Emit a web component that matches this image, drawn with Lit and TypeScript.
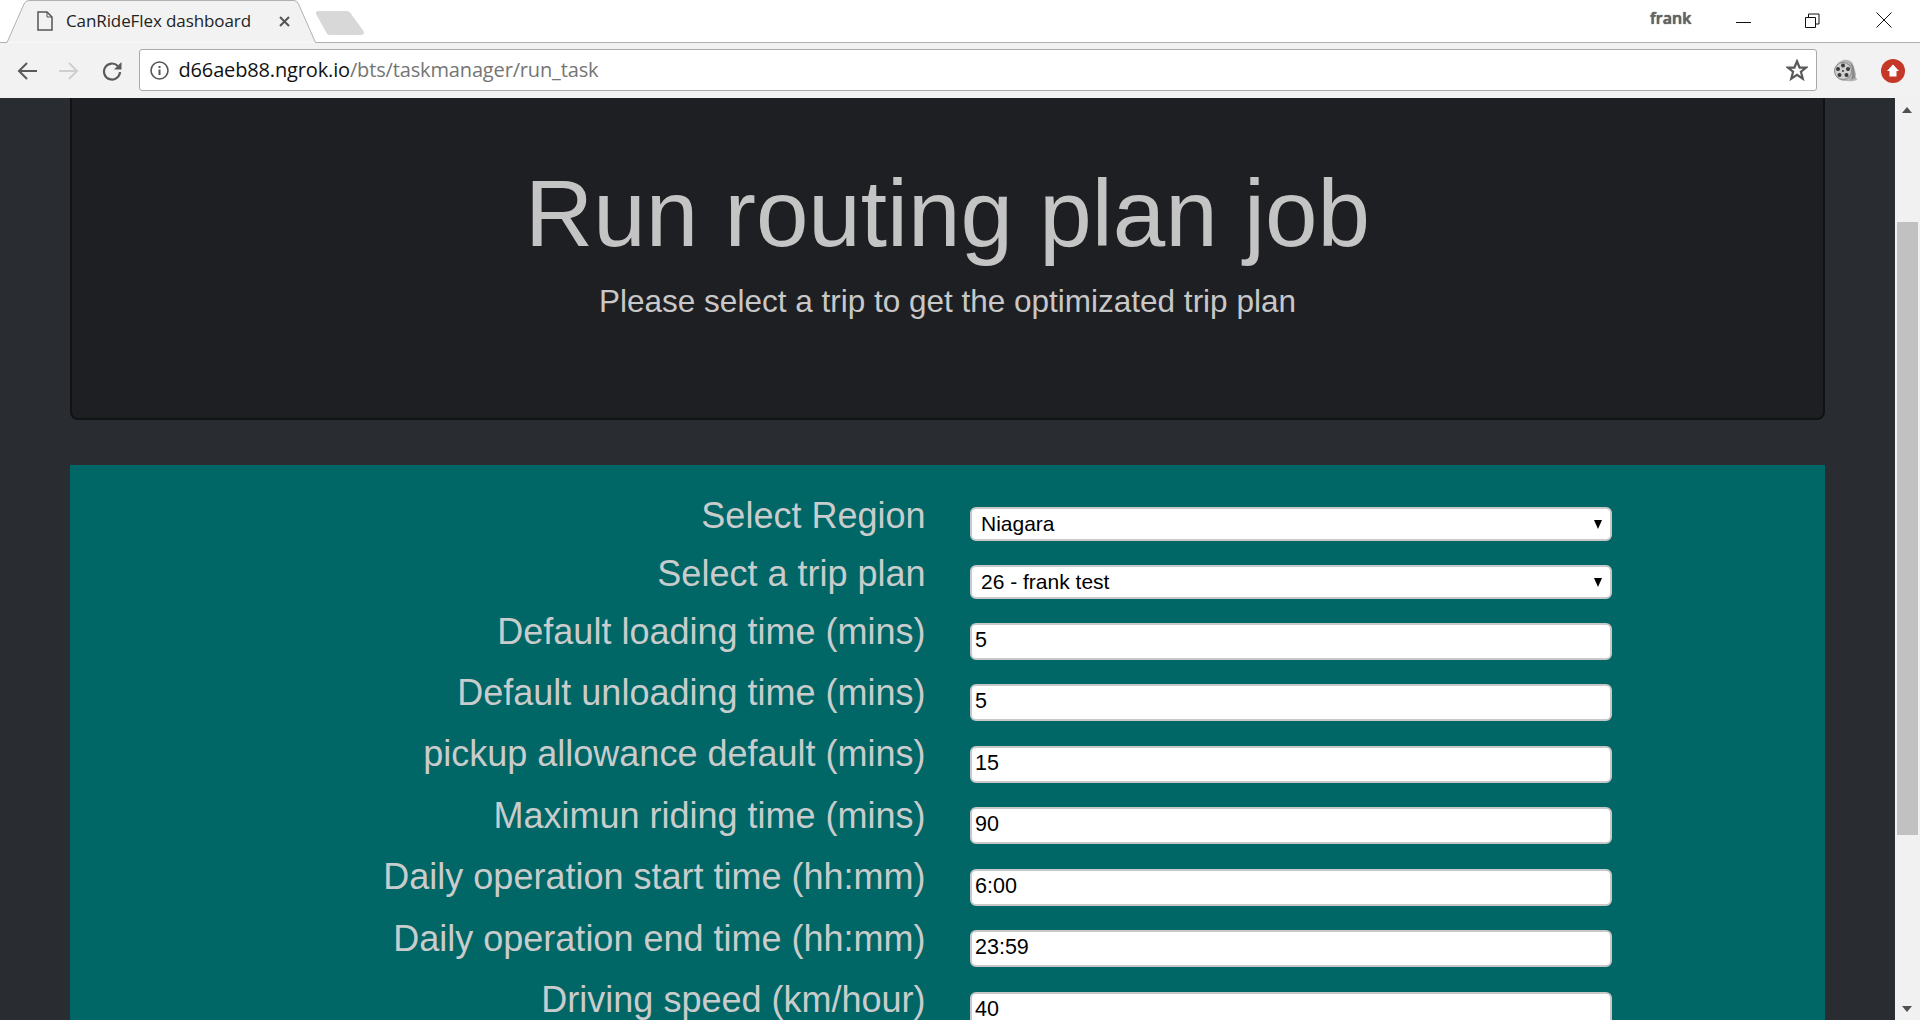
import { LitElement, html, css } from "lit";
import { customElement } from "lit/decorators.js";

const rows: [string, string, boolean, number][] = [
  ["Select Region", "Niagara", true, 58],
  ["Select a trip plan", "26 - frank test", true, 58],
  ["Default loading time (mins)", "5", false, 61],
  ["Default unloading time (mins)", "5", false, 61.5],
  ["pickup allowance default (mins)", "15", false, 61.5],
  ["Maximun riding time (mins)", "90", false, 61.5],
  ["Daily operation start time (hh:mm)", "6:00", false, 61.5],
  ["Daily operation end time (hh:mm)", "23:59", false, 61.5],
  ["Driving speed (km/hour)", "40", false, 61.5],
];

@customElement("app-root")
export class AppRoot extends LitElement {
  static styles = css`
    :host { display: flex; flex-direction: column; width: 1920px; height: 1020px; overflow: hidden; font-family: "Liberation Sans", Arial, sans-serif; background: #fff; }
    .tabstrip { height: 43px; flex: none; box-sizing: border-box; padding: 0 28px 1px 37px; background: #fff; display: flex; align-items: center; position: relative; }
    .tabsvg { position: absolute; left: 0; top: 0; }
    .tabicon { position: relative; flex: none; }
    .tabtitle { position: relative; flex: none; width: 184px; margin-left: 13px; font: 17px/20px "Open Sans", sans-serif; color: #222; letter-spacing: -0.1px; white-space: nowrap; }
    .tabclose { position: relative; flex: none; margin-left: 29px; }
    .spacer { flex: 1; }
    .user { margin: -6px 0 0 0; width: 40px; font: 16px/20px "Open Sans", sans-serif; font-weight: 600; color: #666; text-shadow: 0 0 1px #222, 0 0 3px #fff; }
    .min { flex: none; margin: 0 0 -1px 46px; }
    .restore { flex: none; margin: -2px 0 0 54px; }
    .close { flex: none; margin: -2px 0 0 56px; }
    .toolbar { height: 55px; flex: none; box-sizing: border-box; padding-left: 17px; background: #f2f2f2; display: flex; align-items: center; }
    .forward { margin-left: 22px; }
    .reload { margin-left: 23px; }
    .omni { margin: -1px 0 0 16.5px; width: 1678.5px; height: 42px; flex: none; box-sizing: border-box; padding: 0 8px 0 10px; display: flex; align-items: center; background: #fff; border: 1px solid #a9a9a9; border-radius: 3px; }
    .url { margin-left: 10px; font: 20px/24px "Open Sans", sans-serif; color: #757575; letter-spacing: -0.15px; white-space: nowrap; }
    .url b { font-weight: 400; color: #111; }
    .star { margin-left: auto; }
    .film { margin-left: 17px; flex: none; }
    .red { margin-left: 23px; flex: none; }
    .main { flex: 1; min-height: 0; display: flex; background: #292c30; overflow: hidden; }
    .page { flex: 1; min-width: 0; padding: 0 70px; overflow: hidden; }
    .jumbo { height: 322px; box-sizing: border-box; background: #1e1f23; border: 2px solid #111214; border-top: 0; border-radius: 0 0 8px 8px; text-align: center; padding-top: 63px; }
    .jumbo h1 { margin: 0; font-size: 94.4px; font-weight: 400; line-height: 106px; color: #c4c4c4; }
    .jumbo p { margin: 14px 0 0; font-size: 31.5px; line-height: 40px; color: #c8c8c8; }
    .panel { margin-top: 45px; background: #006666; padding-top: 24px; height: 600px; }
    .row { display: flex; }
    label { width: 855.5px; box-sizing: border-box; padding-top: 2.5px; text-align: right; font-size: 36px; line-height: 48px; color: #c9cccc; white-space: nowrap; flex: none; }
    .ctl { margin-left: 44.5px; width: 642px; flex: none; box-sizing: border-box; background: #fff; border: 2px solid #c8c8c8; border-radius: 6px; color: #000; position: relative; }
    .sel { height: 34px; line-height: 30px; padding-left: 9px; margin-top: 18px; font-size: 21px; }
    .sel::after { content: ""; position: absolute; right: 8px; top: 11px; border-left: 4.5px solid transparent; border-right: 4.5px solid transparent; border-top: 9px solid #000; }
    .inp { height: 37px; line-height: 31px; padding-left: 3px; font-size: 21.5px; margin-top: 18px; }
    .scroll { width: 25px; flex: none; background: #f1f1f1; position: relative; }
    .thumb { position: absolute; left: 2px; width: 21px; top: 124px; height: 613px; background: #c1c1c1; }
    .arr { position: absolute; left: 7px; width: 0; height: 0; border-left: 5.5px solid transparent; border-right: 5.5px solid transparent; }
    .up { top: 9px; border-bottom: 6px solid #505050; }
    .down { bottom: 8px; border-top: 6px solid #505050; }
  `;

  render() {
    return html`
      <div class="tabstrip">
        <svg class="tabsvg" width="1920" height="43" viewBox="0 0 1920 43">
          <path d="M0 42.500H7L24 4Q25.500 .5 29 .5H294Q297 .5 298.500 4L315.500 42.500H1920" fill="#f2f2f2" stroke="#b0b0b0"/>
          <path d="M319 11H346Q350 11 351.500 14.500L363.500 31Q365 35 361 35H330Q327 35 326 32L316 14Q315 11 319 11Z" fill="#d8d8d8"/>
        </svg>
        <svg class="tabicon" width="16" height="20" viewBox="0 0 16 20" fill="none" stroke="#555" stroke-width="1.500"><path d="M1 1H10L15 6V19H1Z"/><path d="M10 1V6H15" stroke-width="1"/></svg>
        <span class="tabtitle">CanRideFlex dashboard</span>
        <svg class="tabclose" width="11" height="11" viewBox="0 0 11 11" stroke="#555" stroke-width="2"><path d="M1 1L10 10M10 1L1 10"/></svg>
        <div class="spacer"></div>
        <span class="user">frank</span>
        <svg class="min" width="15" height="15" viewBox="0 0 15 15" stroke="#111"><path d="M0 8.500H15"/></svg>
        <svg class="restore" width="15" height="15" viewBox="0 0 15 15" fill="none" stroke="#111"><path d="M.5 4.500H10.500V14.500H.5Z"/><path d="M3.500 4V1H14V11H11"/></svg>
        <svg class="close" width="16" height="16" viewBox="0 0 16 16" stroke="#111"><path d="M.5 .5L15.500 15.500M15.500 .5L.5 15.500"/></svg>
      </div>
      <div class="toolbar">
        <svg width="20" height="20" viewBox="0 0 20 20" fill="none" stroke="#5a5a5a" stroke-width="2"><path d="M20 10H2M10 2L2 10L10 18"/></svg>
        <svg class="forward" width="20" height="20" viewBox="0 0 20 20" fill="none" stroke="#cfcfcf" stroke-width="2"><path d="M0 10H18M10 2L18 10L10 18"/></svg>
        <svg class="reload" width="20" height="20" viewBox="0 0 20 20" fill="none" stroke="#5a5a5a" stroke-width="2.200"><path d="M15.800 5A8 8 0 1 0 18 11"/><path d="M19.500 1V8.500H12Z" fill="#5a5a5a" stroke="none"/></svg>
        <div class="omni">
          <svg width="19" height="19" viewBox="0 0 19 19" fill="none" stroke="#555" stroke-width="1.600"><circle cx="9.500" cy="9.500" r="8.500"/><path d="M9.500 8.500V14M9.500 5V7" stroke-width="2"/></svg>
          <span class="url"><b>d66aeb88.ngrok.io</b>/bts/taskmanager/run_task</span>
          <svg class="star" width="22" height="22" viewBox="0 0 24 24" fill="none" stroke="#5a5a5a" stroke-width="2.400"><path d="M12 2.500L14.800 9.300H22L16.300 13.900L18.300 21.500L12 17.200L5.700 21.500L7.700 13.900L2 9.300H9.200Z"/></svg>
        </div>
        <svg class="film" width="24" height="24" viewBox="0 0 24 24">
          <path d="M9 1Q16 0 19 5L22 15Q21 20 24 20Q20 23 14 22Q4 23 1 15Q-1 5 9 1Z" fill="#b4b4b4"/>
          <path d="M16 3Q20 6 20.500 12L21 19L17 21Q20 12 16 3Z" fill="#8a8a8a"/>
          <circle cx="9" cy="12" r="8.500" fill="#cfcfcf" stroke="#888"/>
          <circle cx="9" cy="6.500" r="2" fill="#3a3a3a"/><circle cx="4" cy="10" r="2" fill="#3a3a3a"/><circle cx="14" cy="10" r="2" fill="#3a3a3a"/><circle cx="5.500" cy="16" r="2" fill="#3a3a3a"/><circle cx="12.500" cy="16" r="2" fill="#3a3a3a"/><circle cx="9" cy="12" r="1" fill="#3a3a3a"/>
        </svg>
        <svg class="red" width="24" height="24" viewBox="0 0 24 24"><circle cx="12" cy="12" r="12" fill="#c53727"/><path d="M12 5.500L18 12H15.500V17.500H8.500V12H6Z" fill="#fff"/></svg>
      </div>
      <div class="main">
        <div class="page">
          <div class="jumbo">
            <h1>Run routing plan job</h1>
            <p>Please select a trip to get the optimizated trip plan</p>
          </div>
          <div class="panel">
            ${rows.map(([l, v, isSel, h]) => html`
              <div class="row" style="height:${h}px">
                <label>${l}</label>
                <div class="ctl ${isSel ? "sel" : "inp"}">${v}</div>
              </div>`)}
          </div>
        </div>
        <div class="scroll"><div class="arr up"></div><div class="thumb"></div><div class="arr down"></div></div>
      </div>
    `;
  }
}
